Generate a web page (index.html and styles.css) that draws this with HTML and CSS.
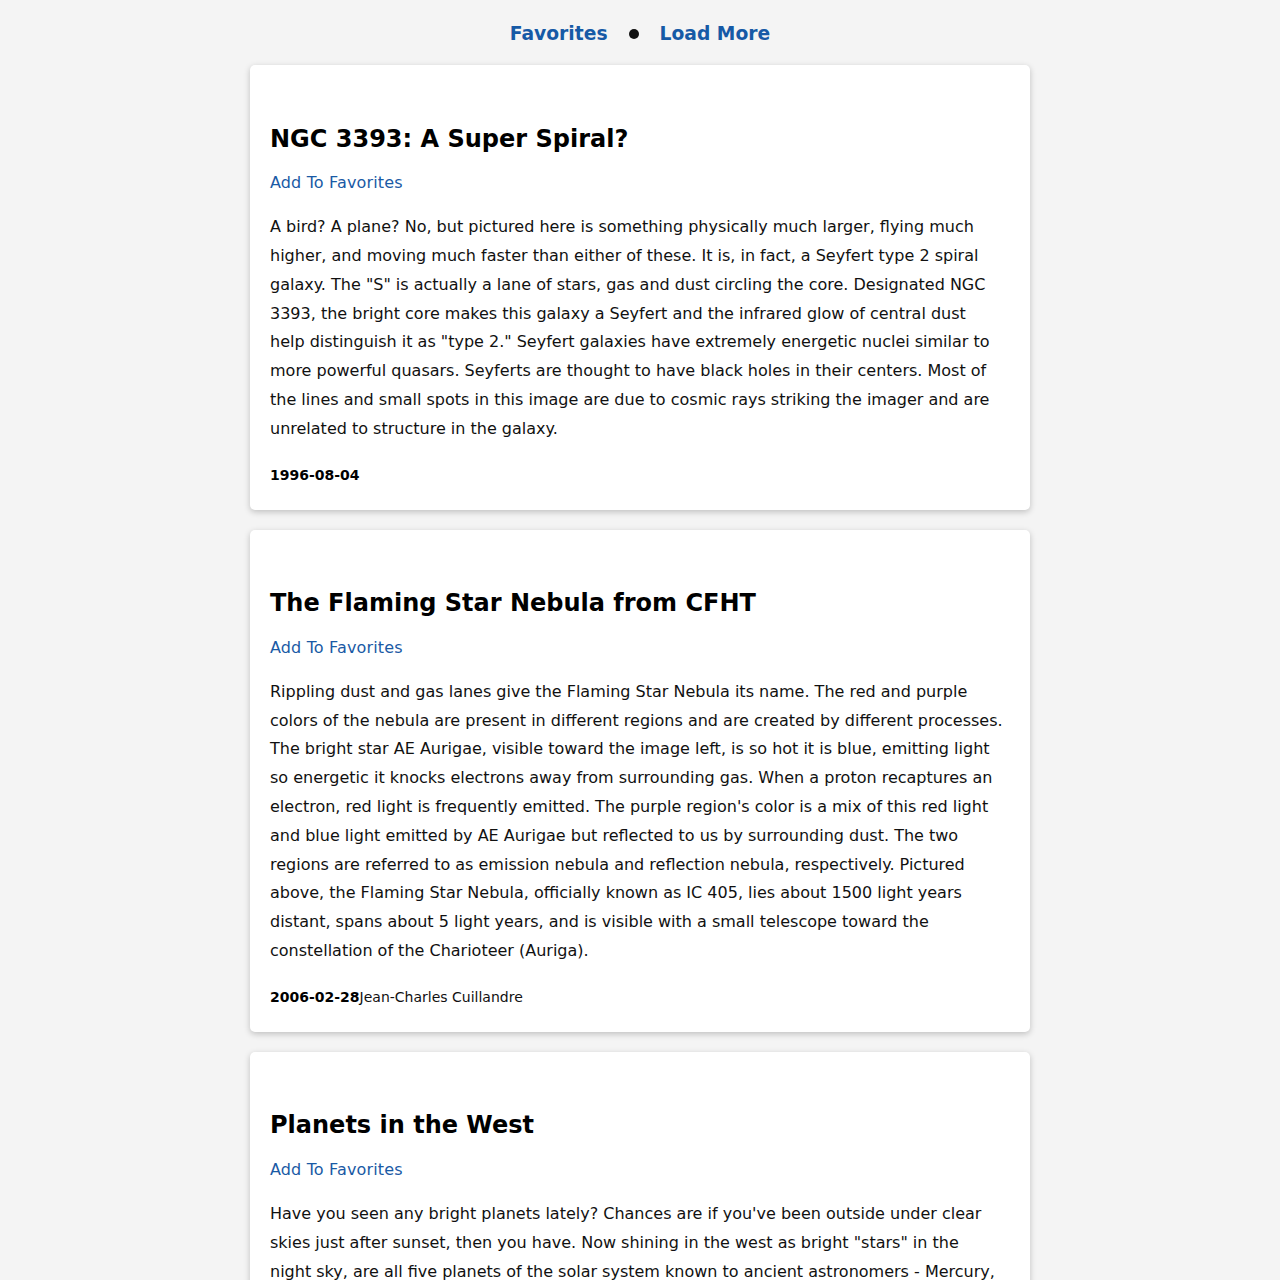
FILE: index.html
```html
<!DOCTYPE html>
<html lang="en">
<head>
<meta charset="utf-8">
<title>APOD</title>
<link rel="stylesheet" href="styles.css">
</head>
<body>
<nav class="nav">
  <a class="nav-link" href="#">Favorites</a>
  <span class="nav-dot"></span>
  <a class="nav-link" href="#">Load More</a>
</nav>
<main class="list">
  <article class="card">
    <div class="media"></div>
    <h2 class="title">NGC 3393: A Super Spiral?</h2>
    <p class="fav"><a href="#">Add To Favorites</a></p>
    <p class="desc">A bird? A plane? No, but pictured here is something physically much larger, flying much higher, and moving much faster than either of these. It is, in fact, a Seyfert type 2 spiral galaxy. The "S" is actually a lane of stars, gas and dust circling the core. Designated NGC 3393, the bright core makes this galaxy a Seyfert and the infrared glow of central dust help distinguish it as "type 2." Seyfert galaxies have extremely energetic nuclei similar to more powerful quasars. Seyferts are thought to have black holes in their centers. Most of the lines and small spots in this image are due to cosmic rays striking the imager and are unrelated to structure in the galaxy.</p>
    <div class="meta"><strong class="date">1996-08-04</strong></div>
  </article>
  <article class="card">
    <div class="media"></div>
    <h2 class="title">The Flaming Star Nebula from CFHT</h2>
    <p class="fav"><a href="#">Add To Favorites</a></p>
    <p class="desc">Rippling dust and gas lanes give the Flaming Star Nebula its name. The red and purple colors of the nebula are present in different regions and are created by different processes. The bright star AE Aurigae, visible toward the image left, is so hot it is blue, emitting light so energetic it knocks electrons away from surrounding gas. When a proton recaptures an electron, red light is frequently emitted. The purple region's color is a mix of this red light and blue light emitted by AE Aurigae but reflected to us by surrounding dust. The two regions are referred to as emission nebula and reflection nebula, respectively. Pictured above, the Flaming Star Nebula, officially known as IC 405, lies about 1500 light years distant, spans about 5 light years, and is visible with a small telescope toward the constellation of the Charioteer (Auriga).</p>
    <div class="meta"><strong class="date">2006-02-28</strong><span class="author">Jean-Charles Cuillandre</span></div>
  </article>
  <article class="card">
    <div class="media"></div>
    <h2 class="title">Planets in the West</h2>
    <p class="fav"><a href="#">Add To Favorites</a></p>
    <p class="desc">Have you seen any bright planets lately? Chances are if you've been outside under clear skies just after sunset, then you have. Now shining in the west as bright "stars" in the night sky, are all five planets of the solar system known to ancient astronomers - Mercury, Venus, Mars, Jupiter, and Saturn. Along with the Moon, they will be grouped together in the western sky over the coming weeks, making a fine sight for those who look up after dark.</p>
    <div class="meta"><strong class="date">2004-03-27</strong></div>
  </article>
</main>
</body>
</html>
```

FILE: styles.css
```css
html, body {
  margin: 0;
  padding: 0;
}
body {
  background: #f4f4f4;
  font-family: "DejaVu Sans", Verdana, sans-serif;
  color: #111;
}
.nav {
  display: flex;
  justify-content: center;
  align-items: center;
  padding: 21px 0 18px;
  line-height: 26px;
}
.nav-link {
  font-size: 18.72px;
  font-weight: bold;
  color: #165aa6;
  text-decoration: none;
}
.nav-dot {
  width: 10px;
  height: 10px;
  border-radius: 50%;
  background: #111;
  margin: 0 21px 0 21px;
}
.list {
  display: flex;
  flex-direction: column;
  align-items: center;
  gap: 20px;
}
.card {
  width: 734px;
  background: #fff;
  border-radius: 5px;
  box-shadow: 0 2px 6px rgba(0, 0, 0, 0.22);
  padding: 20px 26px 22px 20px;
}
.media {
  height: 19.6px;
}
.title {
  font-size: 24px;
  line-height: 28.8px;
  font-weight: bold;
  margin: 20px 0 16px;
  color: #000;
}
.fav {
  margin: 0 0 15px;
  font-size: 16px;
  line-height: 28.8px;
}
.fav a {
  color: #1a5aa5;
  text-decoration: none;
  letter-spacing: 0.15px;
}
.desc {
  margin: 0 0 19px;
  font-size: 16px;
  line-height: 28.8px;
}
.meta {
  font-size: 14px;
  line-height: 25px;
  display: flex;
}
.date {
  font-weight: bold;
  color: #000;
}
.author {
  color: #111;
}
```
